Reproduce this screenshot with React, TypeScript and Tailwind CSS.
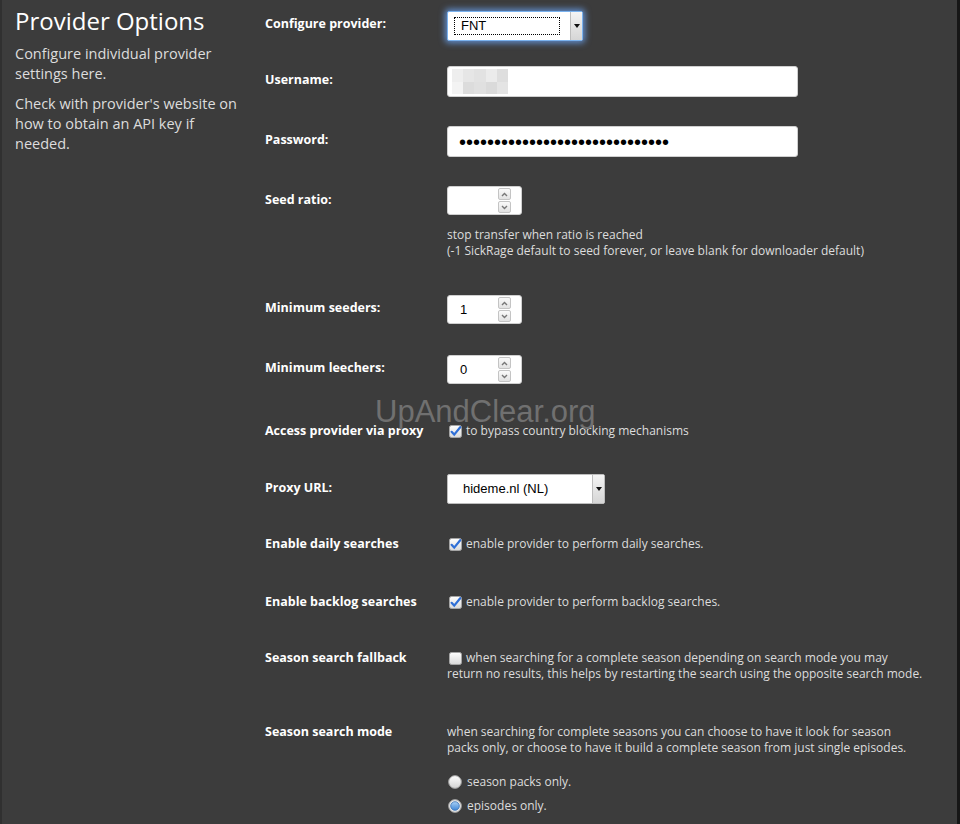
import type { ReactNode } from "react";

interface RowProps {
  label: string;
  children: ReactNode;
  className?: string;
  align?: string;
  labelClass?: string;
}

function Row({ label, children, className = "", align = "items-center", labelClass = "pb-[4px]" }: RowProps) {
  return (
    <div className={`flex ${align} ${className}`}>
      <div className={`w-[182px] shrink-0 text-[12.5px] font-bold leading-4 text-white ${labelClass}`}>{label}</div>
      <div className="flex-1">{children}</div>
    </div>
  );
}

function SelectArrow() {
  return (
    <div className="flex h-full w-[12px] items-center justify-center border-l border-[#bdbdbd] bg-gradient-to-b from-[#f4f4f4] to-[#d6d6d6]">
      <svg width="6" height="4" viewBox="0 0 6 4">
        <path d="M0 0 L6 0 L3 4 Z" fill="#111" />
      </svg>
    </div>
  );
}

function Spinner() {
  return (
    <div className="flex flex-col gap-px">
      {[0, 1].map((i) => (
        <div
          key={i}
          className="flex h-[12px] w-[13px] items-center justify-center rounded-[2px] border border-[#c4c4c4] bg-gradient-to-b from-[#fafafa] to-[#e2e2e2]"
        >
          <svg width="7" height="5" viewBox="0 0 7 5">
            <path
              d={i === 0 ? "M1 4 L3.5 1.5 L6 4" : "M1 1 L3.5 3.5 L6 1"}
              stroke="#777"
              strokeWidth="1.4"
              fill="none"
            />
          </svg>
        </div>
      ))}
    </div>
  );
}

function NumberBox({ value }: { value: string }) {
  return (
    <div className="flex h-[29px] w-[75px] items-center justify-between rounded-[3px] border border-[#cfcfcf] bg-white pl-[12px] pr-[10px]">
      <span className="font-['Liberation_Sans',Arial,sans-serif] text-[13px] text-black">{value}</span>
      <Spinner />
    </div>
  );
}

function Check({ checked }: { checked: boolean }) {
  return (
    <svg width="13" height="13" viewBox="0 0 13 13" className="mr-[4px] shrink-0">
      <defs>
        <linearGradient id="cb" x1="0" y1="0" x2="0" y2="1">
          <stop offset="0" stopColor="#ffffff" />
          <stop offset="1" stopColor="#d9d9d9" />
        </linearGradient>
      </defs>
      <rect x="0.5" y="0.5" width="12" height="12" rx="2" fill="url(#cb)" stroke="#a5a5a5" />
      {checked && <path d="M2.6 6.8 L5.2 9.6 L11.2 2.2" stroke="#2f6fd6" strokeWidth="2.2" fill="none" strokeLinecap="round" />}
    </svg>
  );
}

function Radio({ on }: { on: boolean }) {
  return (
    <svg width="14" height="14" viewBox="0 0 14 14" className="mr-[5px] shrink-0">
      <defs>
        <linearGradient id="rw" x1="0" y1="0" x2="0" y2="1">
          <stop offset="0" stopColor="#ffffff" />
          <stop offset="1" stopColor="#d2d2d2" />
        </linearGradient>
        <linearGradient id="rb" x1="0" y1="0" x2="0" y2="1">
          <stop offset="0" stopColor="#a9d0f5" />
          <stop offset="1" stopColor="#3f86d6" />
        </linearGradient>
      </defs>
      <circle cx="7" cy="7" r="6.4" fill={on ? "#e8e8e8" : "url(#rw)"} stroke="#9a9a9a" strokeWidth="1" />
      {on && <circle cx="7" cy="7" r="4.3" fill="url(#rb)" stroke="#3a74b8" strokeWidth="0.8" />}
    </svg>
  );
}

const blur = [
  "bg-[#eeeeee]", "bg-[#e6e6e6]", "bg-[#e2e2e2]", "bg-[#ebebeb]", "bg-[#dedede]",
  "bg-[#f3f3f3]", "bg-[#dcdcdc]", "bg-[#e0e0e0]", "bg-[#dadada]", "bg-[#e4e4e4]",
];

export default function App() {
  return (
    <div className="relative flex h-[824px] w-[960px] overflow-hidden border-l-2 border-r-[3px] border-l-[#303030] border-r-[#161616] bg-[#3c3c3c] font-['Open_Sans',sans-serif]">
      <div className="w-[263px] shrink-0 pl-[13px] pr-[20px] pt-[5px]">
        <h2 className="text-[24px] leading-[32px] text-white">Provider Options</h2>
        <p className="mt-[7px] text-[14.5px] leading-[20px] text-[#dddddd]">Configure individual provider settings here.</p>
        <p className="mt-[10px] text-[14.5px] leading-[20px] text-[#dddddd]">
          Check with provider's website on how to obtain an API key if needed.
        </p>
      </div>

      <div className="flex-1 text-[12px] leading-4 text-[#dddddd]">
        <Row label="Configure provider:" className="mt-[11px]">
          <div className="flex h-[30px] w-[136px] items-stretch rounded-[2px] border border-[#7ab2ee] bg-white shadow-[0_0_6px_2px_rgba(110,170,255,0.75)]">
            <div className="flex flex-1 items-center pl-[6px] pr-[10px]">
              <div className="flex h-[18px] flex-1 items-center border border-dotted border-black pl-[6px] font-['Liberation_Sans',Arial,sans-serif] text-[13px] text-black">
                FNT
              </div>
            </div>
            <SelectArrow />
          </div>
        </Row>

        <Row label="Username:" className="mt-[25px]">
          <div className="flex h-[31px] w-[351px] items-center rounded-[3px] border border-[#cfcfcf] bg-white pl-[4px]">
            <div className="grid h-[25px] w-[56px] grid-cols-5 grid-rows-2">
              {blur.map((c, i) => (
                <div key={i} className={c} />
              ))}
            </div>
          </div>
        </Row>

        <Row label="Password:" className="mt-[29px]">
          <div className="flex h-[31px] w-[351px] items-center rounded-[3px] border border-[#cfcfcf] bg-white pl-[11px]">
            <span className="font-['Liberation_Sans',Arial,sans-serif] text-[20px] leading-none text-black">
              {"•".repeat(30)}
            </span>
          </div>
        </Row>

        <Row
          label="Seed ratio:"
          className="mt-[29px]"
          align="items-start"
          labelClass="flex h-[29px] items-center pb-[1px]"
        >
          <div className="flex h-[29px] items-center">
            <NumberBox value="" />
          </div>
          <div className="mt-[12px]">
            stop transfer when ratio is reached
            <br />
            (-1 SickRage default to seed forever, or leave blank for downloader default)
          </div>
        </Row>

        <Row label="Minimum seeders:" className="mt-[36px]">
          <NumberBox value="1" />
        </Row>

        <Row label="Minimum leechers:" className="mt-[31px]">
          <NumberBox value="0" />
        </Row>

        <Row label="Access provider via proxy" className="mt-[37px] h-[20px]" labelClass="">
          <div className="flex items-center pl-[2px]">
            <Check checked />
            <span>to bypass country blocking mechanisms</span>
          </div>
        </Row>

        <Row label="Proxy URL:" className="mt-[33px]" labelClass="pb-[2px]">
          <div className="flex h-[30px] w-[158px] items-stretch rounded-[2px] border border-[#bdbdbd] bg-white">
            <div className="flex flex-1 items-center pl-[15px] font-['Liberation_Sans',Arial,sans-serif] text-[13px] text-black">
              hideme.nl (NL)
            </div>
            <SelectArrow />
          </div>
        </Row>

        <Row label="Enable daily searches" className="mt-[30px] h-[20px]" labelClass="">
          <div className="flex items-center pl-[2px]">
            <Check checked />
            <span>enable provider to perform daily searches.</span>
          </div>
        </Row>

        <Row label="Enable backlog searches" className="mt-[38px] h-[20px]" labelClass="">
          <div className="flex items-center pl-[2px]">
            <Check checked />
            <span>enable provider to perform backlog searches.</span>
          </div>
        </Row>

        <Row label="Season search fallback" className="mt-[38px]" align="items-start" labelClass="">
          <div className="whitespace-nowrap">
            <span className="inline-flex translate-y-[2px] pl-[2px] align-top">
              <Check checked={false} />
            </span>
            when searching for a complete season depending on search mode you may
            <br />
            return no results, this helps by restarting the search using the opposite search mode.
          </div>
        </Row>

        <Row label="Season search mode" className="mt-[42px]" align="items-start" labelClass="">
          <div className="whitespace-nowrap">
            when searching for complete seasons you can choose to have it look for season
            <br />
            packs only, or choose to have it build a complete season from just single episodes.
          </div>
          <div className="mt-[16px] flex h-[20px] items-center pl-[1px]">
            <Radio on={false} />
            <span>season packs only.</span>
          </div>
          <div className="mt-[4px] flex h-[20px] items-center pl-[1px]">
            <Radio on />
            <span>episodes only.</span>
          </div>
        </Row>
      </div>

      <div className="absolute left-[373px] top-[396px] font-['Liberation_Sans',Arial,sans-serif] text-[31px] leading-none text-[#707070]">
        UpAndClear.org
      </div>
    </div>
  );
}
